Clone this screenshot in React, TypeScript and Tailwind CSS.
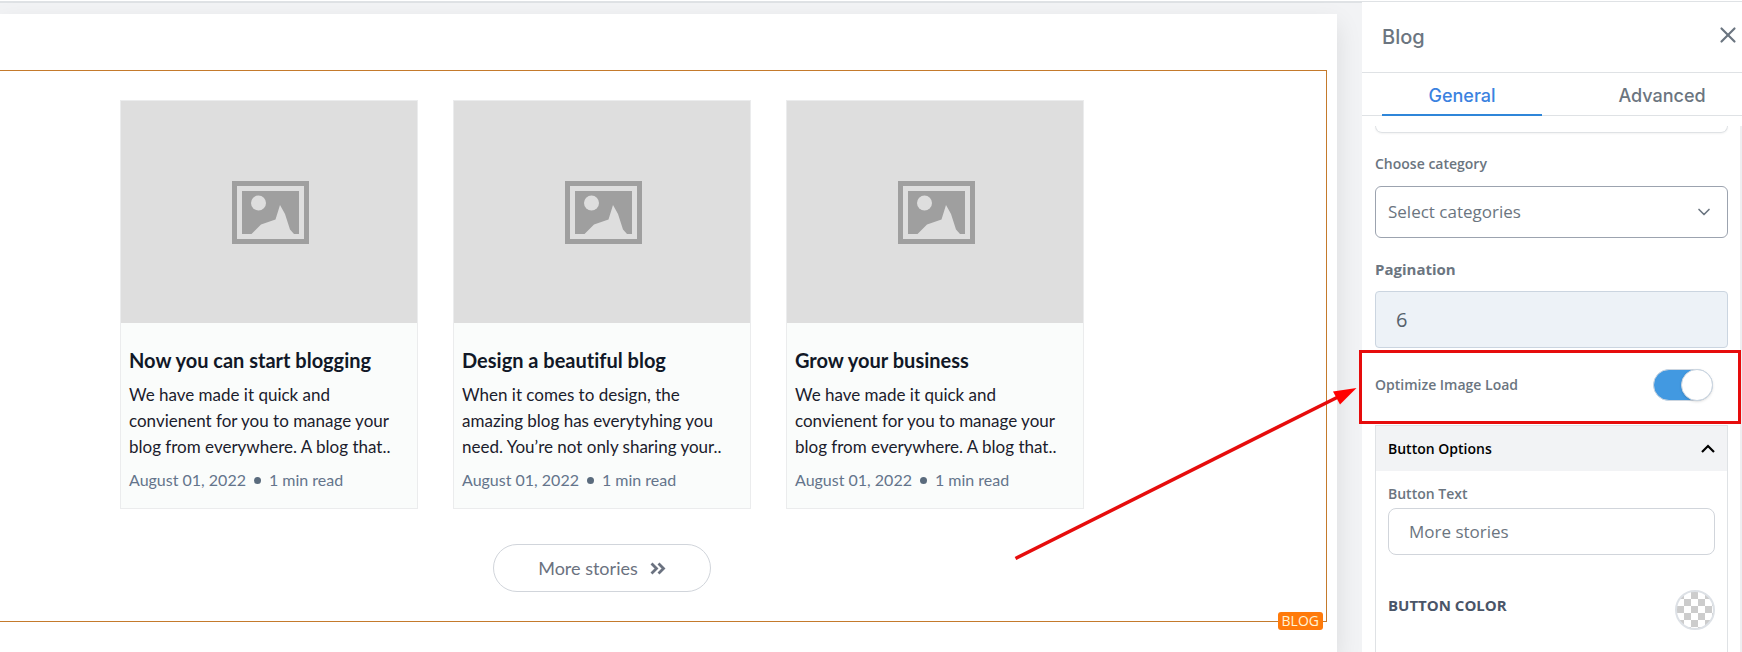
import { useState } from 'react';
import clsx from 'clsx';
import { FiX, FiChevronDown } from 'react-icons/fi';

const posts = [
  {
    title: 'Now you can start blogging',
    excerpt:
      'We have made it quick and convienent for you to manage your blog from everywhere. A blog that..',
    date: 'August 01, 2022',
    readTime: '1 min read',
  },
  {
    title: 'Design a beautiful blog',
    excerpt:
      'When it comes to design, the amazing blog has everytyhing you need. You’re not only sharing your..',
    date: 'August 01, 2022',
    readTime: '1 min read',
  },
  {
    title: 'Grow your business',
    excerpt:
      'We have made it quick and convienent for you to manage your blog from everywhere. A blog that..',
    date: 'August 01, 2022',
    readTime: '1 min read',
  },
];

const tabs = ['General', 'Advanced'];

function ImagePlaceholder() {
  return (
    <div className="aspect-4/3 flex items-center justify-center bg-[#dedede]">
      <svg width="80" height="64" viewBox="-3 -1 80 64" aria-hidden="true">
        <path
          fill="#9f9f9f"
          fillRule="evenodd"
          d="M0 0h77v63H0zM5 5v53h67V5z"
        />
        <path
          fill="#9f9f9f"
          d="M10 10h57v43h-5l-4-4.500-5-15.500-5-9-4.500 14.500-14.500 5-9.500 9.500H10z"
        />
        <circle cx="26.500" cy="22" r="7.500" fill="#dedede" />
      </svg>
    </div>
  );
}

function PostCard({ post }: { post: (typeof posts)[number] }) {
  return (
    <article className="border border-[#ebeced] bg-[#fafcfb]">
      <ImagePlaceholder />
      <div className="px-2 pt-[23px] pb-4">
        <h3 className="text-xl leading-7 font-bold text-[#111827]">
          {post.title}
        </h3>
        <p className="mt-2 text-[17px] leading-[26px] text-[#1a202c]">
          {post.excerpt}
        </p>
        <p className="mt-2 flex items-center text-base leading-6 text-[#64748b]">
          {post.date}
          <span className="mx-2 size-[7px] rounded-full bg-[#5a6b7d]" />
          {post.readTime}
        </p>
      </div>
    </article>
  );
}

function DoubleChevron() {
  return (
    <svg
      width="16"
      height="13"
      viewBox="0 0 16 13"
      fill="none"
      stroke="currentColor"
      strokeWidth="2.800"
      aria-hidden="true"
    >
      <path d="M1.500 1.500l5 5-5 5M8.500 1.500l5 5-5 5" />
    </svg>
  );
}

function Canvas() {
  return (
    <main className="flex-1 min-w-0 flex border-t-2 border-[#dfe2e5] bg-[#f2f3f5] pt-[11px] pr-[25px] font-['Lato',sans-serif] [font-variant-ligatures:none]">
      <div className="flex-1 min-w-0 bg-white pt-14 pr-2.5 shadow-[0_10px_24px_rgba(0,0,0,0.1)]">
        <section className="relative border-y border-r border-[#c47a2c] pt-[29px] pr-[242px] pb-[29px] pl-30">
          <div className="grid grid-cols-3 gap-[35px]">
            {posts.map((post) => (
              <PostCard key={post.title} post={post} />
            ))}
          </div>
          <div className="mt-[35px] flex justify-center">
            <button
              type="button"
              className="flex h-12 w-[218px] items-center justify-center gap-3 rounded-full border border-[#d1d5db] text-lg text-[#6b7280]"
            >
              More stories
              <DoubleChevron />
            </button>
          </div>
          <span className="absolute right-[3px] -bottom-[9px] rounded-[3px] bg-[#ff7a0a] px-1 font-['Open_Sans',sans-serif] text-sm leading-[18px] text-[#fff3d6]">
            BLOG
          </span>
        </section>
      </div>
    </main>
  );
}

function Callout() {
  return (
    <div className="pointer-events-none absolute top-0.5 bottom-px -left-4 -right-[13px] border-3 border-[#e60c0c]">
      <svg
        className="absolute top-8 right-full mr-[3px]"
        width="349"
        height="178"
        viewBox="0 0 349 178"
        aria-hidden="true"
      >
        <path d="M5.500 173.500L328 12" stroke="#e60c0c" strokeWidth="3.500" />
        <path d="M346.500 3l-23.500 3.500 7 13z" fill="#ff0000" />
      </svg>
    </div>
  );
}

function BlogPanel() {
  const [activeTab, setActiveTab] = useState('General');
  const [optimize, setOptimize] = useState(true);
  const [isOpen, setIsOpen] = useState(true);
  const [buttonText, setButtonText] = useState('More stories');

  return (
    <aside className="relative z-10 flex w-[380px] shrink-0 flex-col border-t border-[#dfe2e5] bg-white font-['Open_Sans',sans-serif] text-[#6b7580]">
      <header className="flex h-[71px] shrink-0 items-center justify-between border-b border-[#dfe2e5] pr-px pl-5 font-['Inter',sans-serif]">
        <h2 className="text-xl font-medium">Blog</h2>
        <button type="button" aria-label="Close" className="pb-1">
          <FiX className="size-[26px]" />
        </button>
      </header>

      <div
        role="tablist"
        className="grid h-[43px] shrink-0 grid-cols-2 gap-10 border-b border-[#dfe2e5] pl-5 font-['Inter',sans-serif]"
      >
        {tabs.map((tab) => (
          <button
            key={tab}
            type="button"
            role="tab"
            aria-selected={activeTab === tab}
            className={clsx('-mb-px border-b-2 pt-1 text-lg font-medium', {
              'border-[#2f86d9] text-[#3b82e0]': activeTab === tab,
              'border-transparent': activeTab !== tab,
            })}
            onClick={() => setActiveTab(tab)}
          >
            {tab}
          </button>
        ))}
      </div>

      <div className="mt-2.5 flex-1 border-r-2 border-[#eeeff1] pr-3 pl-[13px]">
        <div className="h-[7px] rounded-b-xl border border-t-0 border-[#dfe2e5] shadow-xs" />

        <label
          htmlFor="category"
          className="mt-[19px] block text-sm leading-6 font-semibold"
        >
          Choose category
        </label>
        <div className="relative mt-2.5">
          <select
            id="category"
            className="h-[52px] w-full appearance-none rounded-md border border-[#9ca3af] bg-white px-3 text-[17px]"
          >
            <option>Select categories</option>
          </select>
          <FiChevronDown className="pointer-events-none absolute top-4 right-[14px] size-5" />
        </div>

        <label
          htmlFor="pagination"
          className="mt-[19px] block text-[15px] leading-6 font-bold"
        >
          Pagination
        </label>
        <input
          id="pagination"
          type="text"
          defaultValue="6"
          className="mt-2.5 block h-[57px] w-full rounded-sm border border-[#cbd5e0] bg-[#edf2f7] px-5 text-xl text-[#56616c]"
        />

        <div className="relative flex h-[77px] items-center justify-between pr-[15px] pb-1">
          <label htmlFor="optimize" className="text-sm font-semibold">
            Optimize Image Load
          </label>
          <input
            id="optimize"
            type="checkbox"
            role="switch"
            checked={optimize}
            onChange={(e) => setOptimize(e.target.checked)}
            className="relative h-8 w-[60px] appearance-none rounded-full border border-[#cbd5e0] bg-[#cbd5e0] before:absolute before:-top-px before:-left-px before:size-8 before:rounded-full before:border before:border-[#cbd5e0] before:bg-white before:shadow-sm checked:bg-[#4299e1] checked:before:left-[27px]"
          />
          <Callout />
        </div>

        <div className="min-h-[260px] border border-[#dfe2e5]">
          <button
            type="button"
            aria-expanded={isOpen}
            className="flex h-[45px] w-full items-center justify-between bg-[#f2f3f5] px-3 text-sm font-semibold text-black"
            onClick={() => setIsOpen(!isOpen)}
          >
            Button Options
            <svg
              width="14"
              height="9"
              viewBox="0 0 14 9"
              fill="none"
              stroke="currentColor"
              strokeWidth="2.200"
              className={clsx({ 'rotate-180': !isOpen })}
              aria-hidden="true"
            >
              <path d="M1 8l6-6 6 6" />
            </svg>
          </button>

          {isOpen && (
            <div className="px-3 pt-[11px]">
              <label
                htmlFor="button-text"
                className="block text-sm leading-6 font-semibold"
              >
                Button Text
              </label>
              <input
                id="button-text"
                type="text"
                value={buttonText}
                onChange={(e) => setButtonText(e.target.value)}
                className="mt-0.5 block h-[47px] w-full rounded-lg border border-[#d1d5db] px-5 text-[17px]"
              />
              <div className="mt-[35px] flex items-start justify-between">
                <span className="text-[15px] leading-[30px] font-bold text-[#4a5568]">
                  BUTTON COLOR
                </span>
                <button
                  type="button"
                  aria-label="Button color"
                  className="size-10 rounded-full border-2 border-[#dde1e6] bg-[repeating-conic-gradient(#cccccc_0_25%,#ffffff_0_50%)] bg-size-[14px_14px] bg-position-[7px_0px]"
                />
              </div>
            </div>
          )}
        </div>
      </div>
    </aside>
  );
}

function App() {
  return (
    <div className="flex h-screen overflow-hidden bg-white pt-px">
      <Canvas />
      <BlogPanel />
    </div>
  );
}

export default App;
